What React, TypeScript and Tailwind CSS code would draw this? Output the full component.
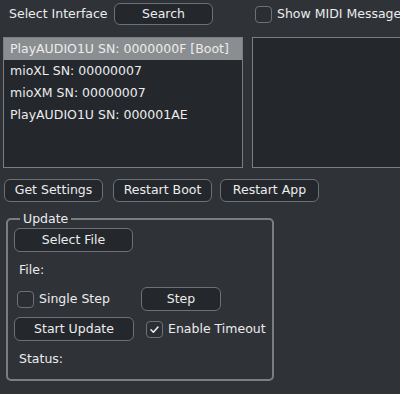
import React from 'react';

const devices = [
  'PlayAUDIO1U SN: 0000000F [Boot]',
  'mioXL SN: 00000007',
  'mioXM SN: 00000007',
  'PlayAUDIO1U SN: 000001AE',
];

function Btn({ label, className = '' }: { label: string; className?: string }) {
  return (
    <button
      type="button"
      className={`flex shrink-0 items-center justify-center whitespace-nowrap rounded-[6px] border border-[#6d7074] bg-[#24282c] text-[12.5px] text-[#ececec] ${className}`}
    >
      {label}
    </button>
  );
}

function Check({ checked = false }: { checked?: boolean }) {
  return (
    <span className="flex h-[17px] w-[17px] shrink-0 items-center justify-center rounded-[4px] border border-[#6d7074] bg-[#2b2f33]">
      {checked && (
        <svg width="11" height="11" viewBox="0 0 11 11" fill="none">
          <path d="M2 5.8 L4.4 8.2 L9 3" stroke="#ececec" strokeWidth="1.6" strokeLinecap="round" strokeLinejoin="round" />
        </svg>
      )}
    </span>
  );
}

export default function App() {
  const selected = 0;
  return (
    <div
      className="h-[394px] w-[400px] overflow-hidden whitespace-nowrap bg-[#2f3338] text-[12.5px] text-[#ececec]"
      style={{ fontFamily: '"DejaVu Sans", sans-serif' }}
    >
      <div className="flex h-[26px] items-center pt-[2px]">
        <span className="ml-[9px] w-[105px] shrink-0">Select Interface</span>
        <Btn label="Search" className="h-[22px] w-[99px]" />
        <span className="ml-[42px]">
          <Check />
        </span>
        <span className="ml-[5px]">Show MIDI Messages</span>
      </div>

      <div className="ml-[3px] mt-[11px] flex gap-[9px]">
        <ul className="h-[131px] w-[240px] shrink-0 border border-[#7b7e81] bg-[#24282c]">
          {devices.map((d, i) => (
            <li
              key={d}
              className={`flex h-[22px] items-center pl-[6px] ${i === selected ? 'bg-[#8b8e91]' : ''}`}
            >
              {d}
            </li>
          ))}
        </ul>
        <div className="h-[131px] w-[160px] shrink-0 border border-[#7b7e81] bg-[#24282c]" />
      </div>

      <div className="ml-[4px] mt-[11px] flex">
        <Btn label="Get Settings" className="h-[23px] w-[99px]" />
        <Btn label="Restart Boot" className="ml-[10px] h-[23px] w-[99px]" />
        <Btn label="Restart App" className="ml-[8px] h-[23px] w-[99px]" />
      </div>

      <fieldset className="ml-[6px] mt-[9px] h-[170px] w-[267px] rounded-[5px] border-2 border-[#7b7e81] px-[6px]">
        <legend className="ml-[6px] px-[3px] leading-[16px]">Update</legend>
        <Btn label="Select File" className="mt-[1px] h-[24px] w-[119px]" />
        <div className="ml-[5px] mt-[10px] leading-[16px]">File:</div>
        <div className="mt-[9px] flex items-center">
          <span className="ml-[3px]">
            <Check />
          </span>
          <span className="ml-[5px] w-[102px] shrink-0">Single Step</span>
          <Btn label="Step" className="h-[24px] w-[80px]" />
        </div>
        <div className="mt-[6px] flex items-center">
          <Btn label="Start Update" className="h-[24px] w-[120px]" />
          <span className="ml-[12px]">
            <Check checked />
          </span>
          <span className="ml-[5px]">Enable Timeout</span>
        </div>
        <div className="ml-[5px] mt-[10px] leading-[16px]">Status:</div>
      </fieldset>
    </div>
  );
}
